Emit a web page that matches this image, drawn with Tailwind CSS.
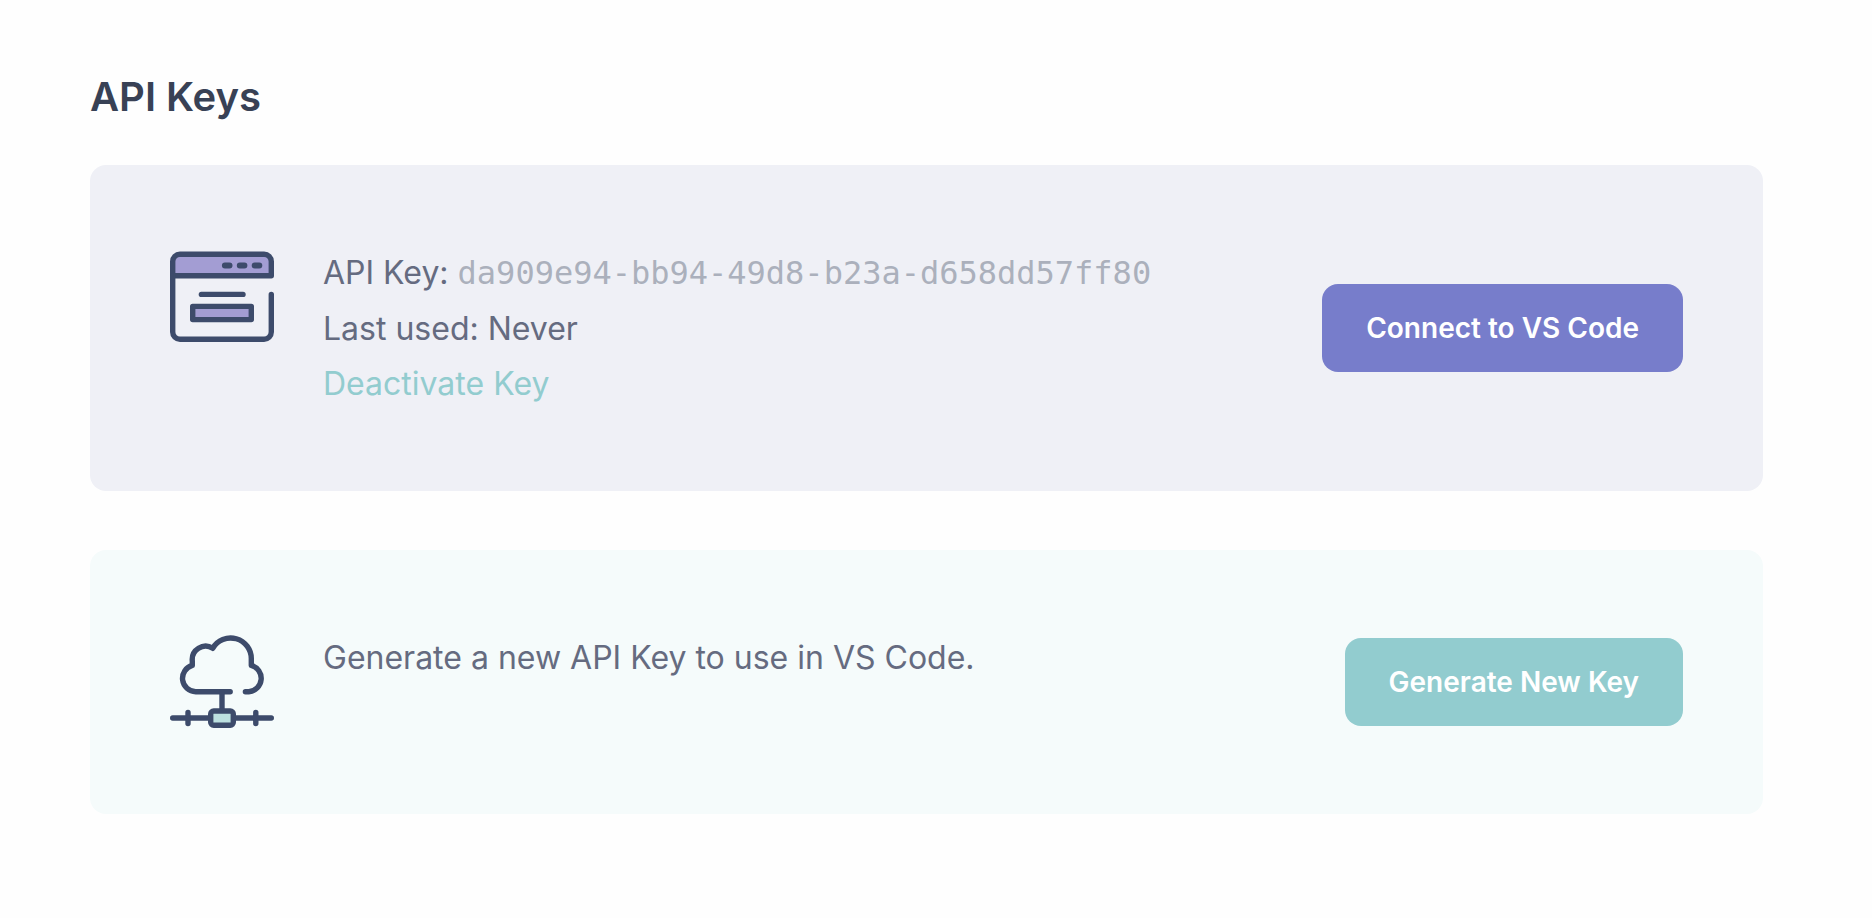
<!doctype html>
<html lang="en">

<head>
	<meta charset="UTF-8" />
	<meta name="viewport" content="width=device-width, initial-scale=1.0" />
	<title>API Keys</title>
	<script src="https://cdn.jsdelivr.net/npm/@tailwindcss/browser@4"></script>
</head>

<body class="bg-[#fefefe] font-['Inter',sans-serif] text-[#656b80]">
	<main class="pt-[69px] pb-24 pl-[90px] pr-[109px]">
		<h1 class="text-[40px] leading-14 font-semibold text-[#384155]">API Keys</h1>

		<section class="flex items-center gap-[49px] mt-10 p-20 rounded-2xl bg-[#eff0f6]">
			<svg class="size-26 shrink-0 self-start" viewBox="0 0 104 104" fill="none" stroke="#3d4b6b"
				stroke-width="5.4" stroke-linecap="round" stroke-linejoin="round" aria-hidden="true">
				<path d="M2.7 30.7V16.5a7.2 7.2 0 0 1 7.2-7.2h84.2a7.2 7.2 0 0 1 7.2 7.2v14.2z" fill="#a39dd3" />
				<path d="M2.7 30.7v56.4a7.2 7.2 0 0 0 7.2 7.2h84.2a7.2 7.2 0 0 0 7.2-7.2V49.5" />
				<path d="M31.4 49.4H73" />
				<path d="M22.7 61.4h58.6v13.2H22.7z" fill="#a39dd3" />
				<path d="M54.9 20.4h4.6M69.8 20.4h4.6M84.7 20.4h4.6" stroke-width="6" />
			</svg>
			<div class="flex-1 text-[32px] leading-[55px]">
				<p>API Key: <span class="font-['DejaVu_Sans_Mono',monospace] text-[#abb0bc]">da909e94-bb94-49d8-b23a-d658dd57ff80</span></p>
				<p>Last used: Never</p>
				<p><a href="#" class="text-[#92cccf]">Deactivate Key</a></p>
			</div>
			<button type="button"
				class="px-11 py-6 rounded-2xl bg-[#777dcb] text-[28px] leading-10 font-semibold text-white cursor-pointer">Connect to VS Code</button>
		</section>

		<section class="flex items-center gap-[49px] mt-[59px] p-20 rounded-2xl bg-[#f5fbfb]">
			<svg class="size-26 shrink-0 self-start" viewBox="0 0 104 104" fill="none" stroke="#3d4b6b"
				stroke-width="5.4" stroke-linecap="round" stroke-linejoin="round" aria-hidden="true">
				<path d="M60.2 61.7H25.7A13.4 13.4 0 0 1 22.3 35.4V31A13.4 13.4 0 0 1 42.7 18.3A20.7 20.7 0 0 1 81.3 29.3V35.4A13.4 13.4 0 0 1 78.8 61.7H75.4" />
				<path d="M52 61.7V81" />
				<path d="M2.7 88h38M63.3 88h38M18 82.4v11.2M85.8 82.4v11.2" />
				<rect x="40.7" y="81" width="22.6" height="14.3" rx="3" fill="#bde1e0" />
			</svg>
			<p class="flex-1 self-start text-[32px] leading-[55px]">Generate a new API Key to use in VS Code.</p>
			<button type="button"
				class="px-11 py-6 rounded-2xl bg-[#92cccf] text-[28px] leading-10 font-semibold text-white cursor-pointer">Generate New Key</button>
		</section>
	</main>
</body>

</html>
